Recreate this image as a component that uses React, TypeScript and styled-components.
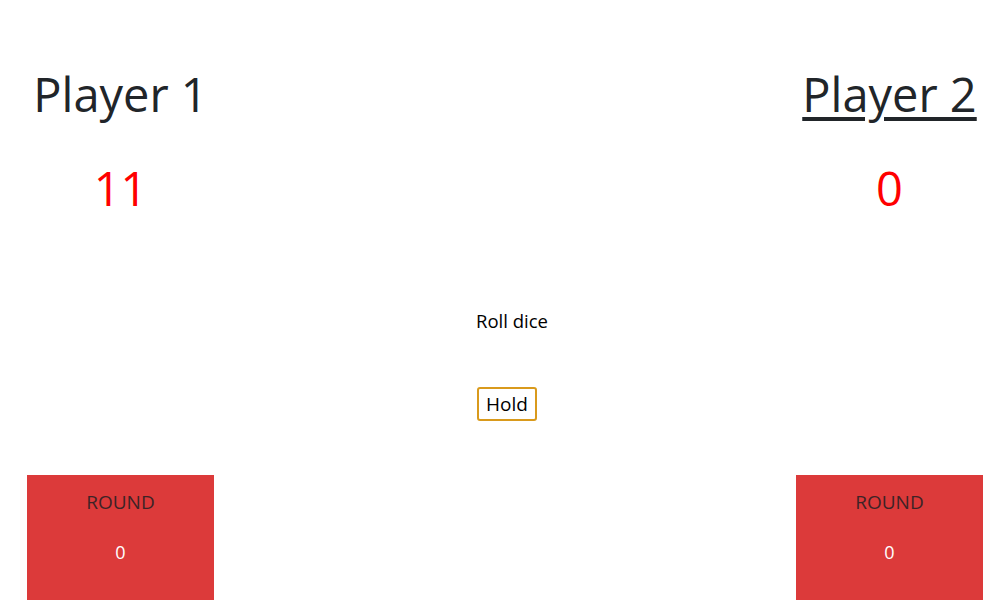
import React from "react";
import styled, { createGlobalStyle } from "styled-components";

const GlobalStyle = createGlobalStyle`
  html, body { margin: 0; padding: 0; background: #ffffff; }
  body {
    font-family: "Open Sans", "Noto Sans", "Liberation Sans", sans-serif;
    color: #212529;
  }
`;

const Board = styled.div`
  display: grid;
  grid-template-columns: 187px 1fr 187px;
  height: 611px;
  padding: 0 14px 11px 27px;
  box-sizing: border-box;
`;

const PlayerColumn = styled.section`
  display: flex;
  flex-direction: column;
  align-items: center;
  padding-top: 64px;
`;

const PlayerName = styled.h1<{ $active?: boolean }>`
  margin: 0;
  font-size: 47px;
  font-weight: 400;
  line-height: 60px;
  color: #212529;
  white-space: nowrap;
  text-decoration: ${(p) => (p.$active ? "underline" : "none")};
  text-decoration-thickness: 4px;
  text-underline-offset: 5px;
`;

const Score = styled.div`
  margin-top: 34px;
  font-size: 47px;
  line-height: 60px;
  color: #ff0000;
`;

const RoundBox = styled.div`
  margin-top: auto;
  width: 187px;
  height: 125px;
  background: #dc3a3a;
  display: flex;
  flex-direction: column;
  align-items: center;
  padding-top: 15px;
  box-sizing: border-box;
  gap: 26px;
`;

const RoundLabel = styled.div`
  font-size: 19px;
  line-height: 24px;
  color: #3d2326;
`;

const RoundValue = styled.div`
  font-size: 18px;
  line-height: 24px;
  color: #ffffff;
`;

const Controls = styled.div`
  display: flex;
  flex-direction: column;
  align-items: flex-start;
  padding-left: 262px;
  padding-top: 309px;
  gap: 54px;
`;

const RollButton = styled.button`
  background: none;
  border: none;
  padding: 0;
  font-family: inherit;
  font-size: 18.5px;
  line-height: 24px;
  color: #000000;
  cursor: pointer;
`;

const HoldButton = styled.button`
  margin-left: 1px;
  background: #ffffff;
  border: 2px solid #d99a1c;
  border-radius: 3px;
  padding: 2px 7px;
  height: 34px;
  font-family: inherit;
  font-size: 19px;
  line-height: 26px;
  color: #000000;
  cursor: pointer;
`;

export default function App() {
  return (
    <>
      <GlobalStyle />
      <Board>
        <PlayerColumn>
          <PlayerName>Player 1</PlayerName>
          <Score>11</Score>
          <RoundBox>
            <RoundLabel>ROUND</RoundLabel>
            <RoundValue>0</RoundValue>
          </RoundBox>
        </PlayerColumn>
        <Controls>
          <RollButton>Roll dice</RollButton>
          <HoldButton>Hold</HoldButton>
        </Controls>
        <PlayerColumn>
          <PlayerName $active>Player 2</PlayerName>
          <Score>0</Score>
          <RoundBox>
            <RoundLabel>ROUND</RoundLabel>
            <RoundValue>0</RoundValue>
          </RoundBox>
        </PlayerColumn>
      </Board>
    </>
  );
}
